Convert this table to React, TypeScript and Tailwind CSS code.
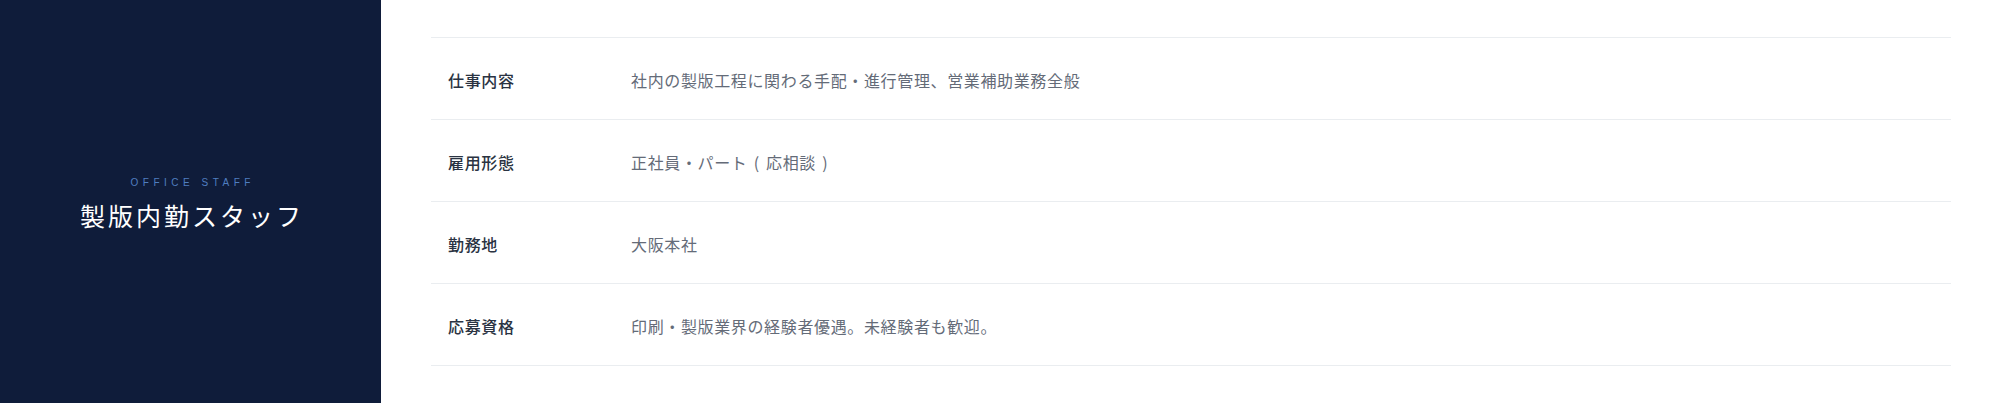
import React from "react";

const P = ({ c }: { c: string }) => <span className="inline-block px-[2px]">{c}</span>;

const rows: { label: string; value: React.ReactNode }[] = [
  { label: "仕事内容", value: "社内の製版工程に関わる手配・進行管理、営業補助業務全般" },
  {
    label: "雇用形態",
    value: (
      <>
        正社員・パート <P c="(" /> 応相談 <P c=")" />
      </>
    ),
  },
  { label: "勤務地", value: "大阪本社" },
  { label: "応募資格", value: "印刷・製版業界の経験者優遇。未経験者も歓迎。" },
];

export default function App() {
  return (
    <div
      className="flex w-[2000px] h-[403px] bg-white"
      style={{ fontFamily: '"Noto Sans CJK JP", "Noto Sans", sans-serif' }}
    >
      <div className="w-[381px] shrink-0 bg-[#0f1c3a] flex flex-col items-center justify-center pt-[3px]">
        <div
          className="text-[10px] leading-[12px] tracking-[0.45em] pl-[0.45em] text-[#4f7ec0]"
          style={{ fontFamily: '"Liberation Sans", Arial, sans-serif' }}
        >
          OFFICE STAFF
        </div>
        <div className="mt-[11px] text-[25px] leading-[30px] tracking-[0.12em] pl-[0.12em] text-white">
          製版内勤スタッフ
        </div>
      </div>
      <div className="flex-1 pl-[50px] pr-[49px] pt-[37px]">
        <div className="border-t border-[#eaedf0]">
          {rows.map((r) => (
            <div
              key={r.label}
              className="flex items-start border-b border-[#eaedf0] pt-[30px] pb-[27px] text-[16px] leading-6 tracking-[0.04em]"
            >
              <div className="w-[200px] shrink-0 pl-[17px] font-medium text-[#2a3342]">
                {r.label}
              </div>
              <div className="text-[#646b78]">{r.value}</div>
            </div>
          ))}
        </div>
      </div>
    </div>
  );
}
